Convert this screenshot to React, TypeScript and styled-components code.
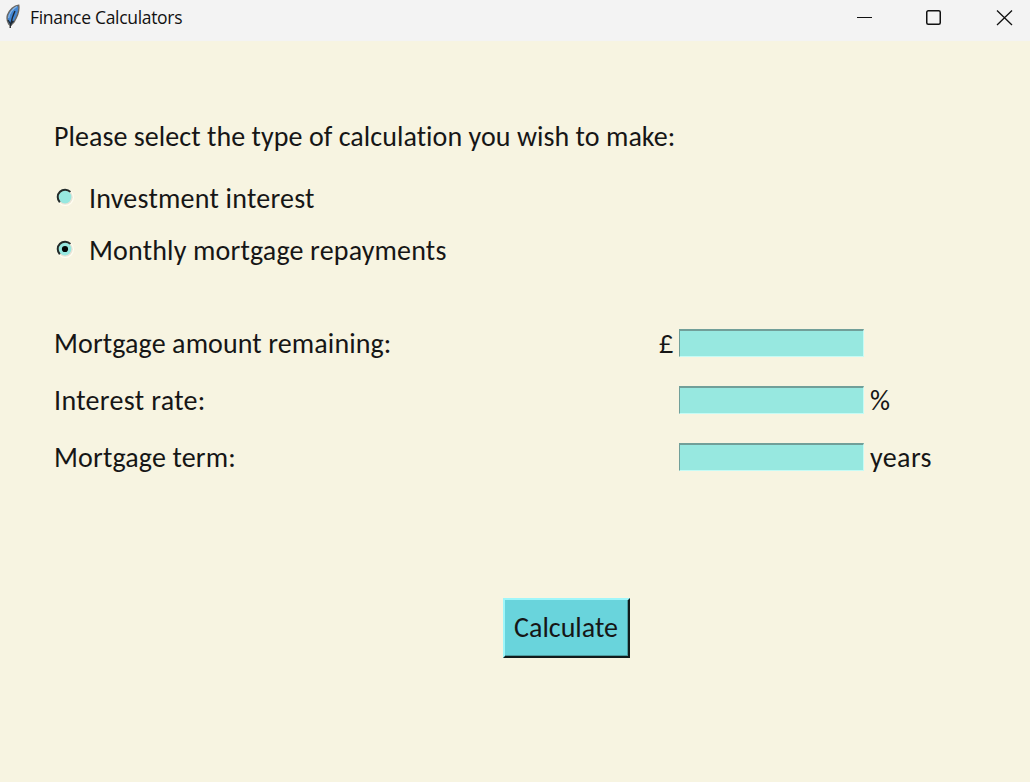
import React, { useState } from "react";
import styled, { createGlobalStyle } from "styled-components";

const GlobalStyle = createGlobalStyle`
  * { box-sizing: border-box; }
  body { margin: 0; background: #f7f4e1; overflow: hidden; }
`;

const Window = styled.div`
  display: flex;
  flex-direction: column;
  width: 1030px;
  height: 782px;
  background: #f7f4e1;
  color: #161616;
  font-family: Carlito, Lato, sans-serif;
  font-size: 28px;
  line-height: 36px;
  font-variant-ligatures: none;
`;

const TitleBar = styled.header`
  display: flex;
  align-items: flex-start;
  height: 41px;
  flex: none;
  background: #f3f3f3;
  color: #111;
`;

const Title = styled.h1`
  flex: 1;
  margin: 5px 0 0 10px;
  font: 400 17.5px/24px "Open Sans", sans-serif;
  letter-spacing: -0.31px;
`;

const Feather = styled.svg`
  width: 20px;
  height: 32px;
  display: block;
`;

const WindowButtons = styled.div`
  display: flex;
  gap: 54px;
  padding: 9px 17px 0 0;
  svg { display: block; }
`;

const Content = styled.main`
  padding: 78px 54px 0;
`;

const Text = styled.span<{ $tracking?: number }>`
  display: block;
  white-space: pre;
  letter-spacing: ${(p) => p.$tracking ?? 0}px;
`;

const Options = styled.div`
  display: flex;
  flex-direction: column;
  gap: 16px;
  margin-top: 26px;
`;

const Option = styled.div`
  display: flex;
  gap: 14px;
  height: 36px;
  cursor: default;
`;

const Dial = styled.svg`
  width: 21px;
  height: 21px;
  margin-top: 5px;
`;

const Fields = styled.div`
  display: grid;
  grid-template-columns: 605px 20px 185px 1fr;
  row-gap: 21px;
  margin-top: 57px;
`;

const Entry = styled.input`
  width: 185px;
  height: 28px;
  margin-top: 3px;
  padding: 0 4px;
  border: solid;
  border-width: 2px 1px 1px 1px;
  border-color: #719f99 #c6fbf5 #c6fbf5 #719f99;
  border-radius: 0;
  background: #97e8e0;
  font: inherit;
  outline: none;
`;

const Currency = styled(Text)`
  font-family: Lato, sans-serif;
  font-size: 24.5px;
`;

const Suffix = styled(Text)`
  margin-left: 6px;
`;

const CalculateButton = styled.button`
  display: block;
  width: 127px;
  height: 60px;
  margin: 122px 0 0 449px;
  padding: 1px 1px 1px 0;
  border: solid;
  border-width: 2px 2px 2px 2px;
  border-color: #9ff6fa #111b1c #111b1c #9ff6fa;
  box-shadow: inset -1px -1px #4b9ca0;
  background: #69d4dc;
  color: #161616;
  font: inherit;
`;

function Radio({ label, selected, tracking, onSelect }: {
  label: string; selected: boolean; tracking: number; onSelect: () => void;
}) {
  return (
    <Option role="radio" aria-checked={selected} onClick={onSelect}>
      <Dial viewBox="0 0 21 21">
        <circle cx="11.300" cy="11.300" r="8.600" fill="#fffdf2" />
        <circle cx="11.200" cy="11.200" r="7.600" fill="#e9e4d6" />
        <circle cx="11" cy="11" r="6.400" fill="#97e8e0" />
        <path d="M5.800 16.200A7.300 7.300 0 0 1 16.400 5.900" fill="none" stroke="#222b29" strokeWidth="2" />
        {selected && <circle cx="11" cy="11" r="3.100" fill="#050808" />}
      </Dial>
      <Text $tracking={tracking}>{label}</Text>
    </Option>
  );
}

const rows = [
  { label: "Mortgage amount remaining:", prefix: "£", suffix: "", tracking: 0.11 },
  { label: "Interest rate:", prefix: "", suffix: "%", tracking: 0.33 },
  { label: "Mortgage term:", prefix: "", suffix: "years", tracking: 0.15 },
];

export default function App() {
  const [kind, setKind] = useState("mortgage");
  return (
    <Window>
      <GlobalStyle />
      <TitleBar>
        <Feather viewBox="0 0 20 32">
          <path d="M10.200 28 10.500 23" stroke="#222" strokeWidth="1.400" />
          <path d="M18.700 5.200C14 5.500 9.500 10 7.500 15c-.8 3-.7 6 1.200 9l1.800 1.500 3.500-3.500c3.200-5 5.500-12 4.700-16.800z" fill="#4386d2" stroke="#6a6763" strokeWidth="1.400" />
          <path d="M17 6.500C12.500 8.500 9 14 8.600 18" fill="none" stroke="#8cb7e3" strokeWidth="1.200" />
          <path d="M15 11C13 15 11.500 20 10.500 26M8 20l2.500 4 3-3" fill="none" stroke="#1c2732" strokeWidth="1.300" />
        </Feather>
        <Title>Finance Calculators</Title>
        <WindowButtons>
          <svg width="16" height="18" viewBox="0 0 16 18"><path d="M1 8.500h15" stroke="#111" /></svg>
          <svg width="16" height="18" viewBox="0 0 16 18"><rect x=".75" y="1.750" width="13.500" height="13.500" rx="1.500" fill="none" stroke="#111" strokeWidth="1.500" /></svg>
          <svg width="17" height="18" viewBox="0 0 17 18"><path d="M1 1.500 16 16M16 1.500 1 16" stroke="#111" strokeWidth="1.300" /></svg>
        </WindowButtons>
      </TitleBar>
      <Content>
        <Text $tracking={0.055}>Please select the type of calculation you wish to make:</Text>
        <Options>
          <Radio label="Investment interest" tracking={0.23} selected={kind === "investment"} onSelect={() => setKind("investment")} />
          <Radio label="Monthly mortgage repayments" tracking={0.17} selected={kind === "mortgage"} onSelect={() => setKind("mortgage")} />
        </Options>
        <Fields>
          {rows.map((r) => (
            <React.Fragment key={r.label}>
              <Text $tracking={r.tracking}>{r.label}</Text>
              <Currency>{r.prefix}</Currency>
              <Entry aria-label={r.label} />
              <Suffix $tracking={r.suffix === "years" ? 0.4 : 0}>{r.suffix}</Suffix>
            </React.Fragment>
          ))}
        </Fields>
        <CalculateButton>Calculate</CalculateButton>
      </Content>
    </Window>
  );
}
